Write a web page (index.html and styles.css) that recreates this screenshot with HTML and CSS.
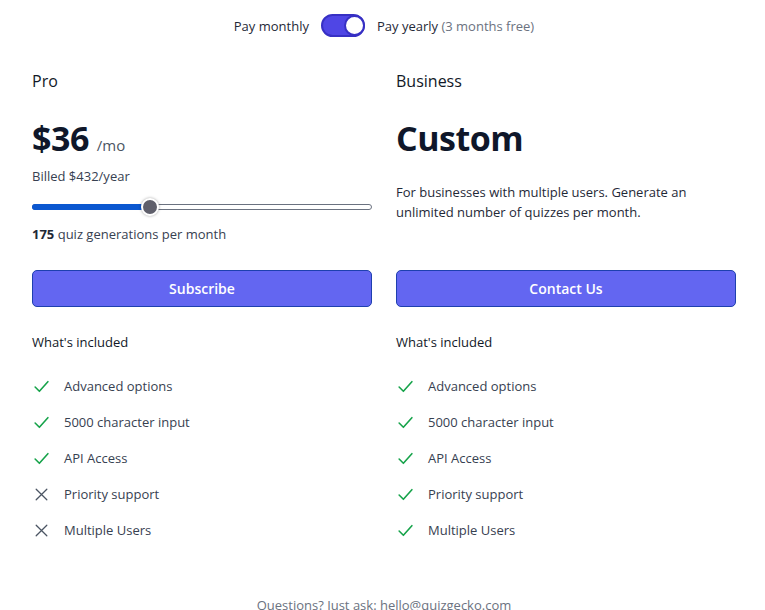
FILE: index.html
```html
<!DOCTYPE html>
<html>
<head>
<meta charset="utf-8">
<link rel="stylesheet" href="styles.css">
</head>
<body>
<div class="page">
  <div class="billing">
    <span class="label">Pay monthly</span>
    <span class="switch"><span class="knob"></span></span>
    <span class="label">Pay yearly <span class="muted">(3 months free)</span></span>
  </div>

  <div class="plans">
    <section class="plan">
      <div class="plan-top">
        <h2 class="plan-name">Pro</h2>
        <div class="price-row">
          <span class="price">$36</span>
          <span class="per">/mo</span>
        </div>
        <p class="billed">Billed $432/year</p>
        <div class="slider">
          <div class="fill" style="width: 34.5%"></div>
          <div class="thumb" style="left: 34.5%"></div>
        </div>
        <p class="usage"><b>175</b> quiz generations per month</p>
      </div>
      <button class="cta">Subscribe</button>
      <h3 class="included">What's included</h3>
      <ul class="features">
        <li><svg class="ic yes" viewBox="0 0 16 16"><path d="M2 8.5 L6 12.5 L14 3.5"/></svg>Advanced options</li>
        <li><svg class="ic yes" viewBox="0 0 16 16"><path d="M2 8.5 L6 12.5 L14 3.5"/></svg>5000 character input</li>
        <li><svg class="ic yes" viewBox="0 0 16 16"><path d="M2 8.5 L6 12.5 L14 3.5"/></svg>API Access</li>
        <li><svg class="ic no" viewBox="0 0 16 16"><path d="M3 3 L13 13 M13 3 L3 13"/></svg>Priority support</li>
        <li><svg class="ic no" viewBox="0 0 16 16"><path d="M3 3 L13 13 M13 3 L3 13"/></svg>Multiple Users</li>
      </ul>
    </section>

    <section class="plan">
      <div class="plan-top">
        <h2 class="plan-name">Business</h2>
        <div class="price-row">
          <span class="price">Custom</span>
        </div>
        <p class="desc">For businesses with multiple users. Generate an unlimited number of quizzes per month.</p>
      </div>
      <button class="cta">Contact Us</button>
      <h3 class="included">What's included</h3>
      <ul class="features">
        <li><svg class="ic yes" viewBox="0 0 16 16"><path d="M2 8.5 L6 12.5 L14 3.5"/></svg>Advanced options</li>
        <li><svg class="ic yes" viewBox="0 0 16 16"><path d="M2 8.5 L6 12.5 L14 3.5"/></svg>5000 character input</li>
        <li><svg class="ic yes" viewBox="0 0 16 16"><path d="M2 8.5 L6 12.5 L14 3.5"/></svg>API Access</li>
        <li><svg class="ic yes" viewBox="0 0 16 16"><path d="M2 8.5 L6 12.5 L14 3.5"/></svg>Priority support</li>
        <li><svg class="ic yes" viewBox="0 0 16 16"><path d="M2 8.5 L6 12.5 L14 3.5"/></svg>Multiple Users</li>
      </ul>
    </section>
  </div>

  <p class="footer">Questions? Just ask: hello@quizgecko.com</p>
</div>
</body>
</html>
```

FILE: styles.css
```css
* { box-sizing: border-box; }
html, body { margin: 0; padding: 0; background: #fff; }
body {
  font-family: "Open Sans", "Noto Sans", Arial, sans-serif;
  color: #1f2937;
  overflow: hidden;
}
.page {
  width: 704px;
  margin-left: 32px;
  padding-top: 14px;
}
.billing {
  display: flex;
  align-items: center;
  justify-content: center;
  gap: 12px;
  height: 23px;
  font-size: 13px;
  color: #1f2937;
}
.muted { color: #6b7280; }
.switch {
  width: 44px;
  height: 23px;
  border-radius: 12px;
  background: #4f46e5;
  border: 2px solid #3730c4;
  display: flex;
  justify-content: flex-end;
  align-items: center;
}
.knob {
  width: 21px;
  height: 21px;
  border-radius: 50%;
  background: #fff;
  border: 2px solid #3730c4;
  margin-right: -2px;
}
.plans {
  display: grid;
  grid-template-columns: 340px 340px;
  column-gap: 24px;
  margin-top: 32px;
}
.plan { display: flex; flex-direction: column; }
.plan-top {
  height: 201px;
  display: flex;
  flex-direction: column;
}
.plan-name {
  margin: 0;
  font-size: 16px;
  font-weight: 400;
  line-height: 24px;
  color: #111827;
}
.price-row {
  display: flex;
  align-items: baseline;
  gap: 8px;
  margin-top: 25px;
  height: 40px;
}
.price {
  font-size: 34px;
  font-weight: 700;
  line-height: 40px;
  color: #0f172a;
  letter-spacing: -0.5px;
}
.per {
  font-size: 15px;
  color: #4b5563;
}
.billed {
  margin: 9px 0 0;
  font-size: 13px;
  line-height: 18px;
  color: #374151;
}
.slider {
  position: relative;
  height: 6px;
  margin-top: 19px;
  border: 1px solid #6b7280;
  border-radius: 3px;
  background: #fff;
}
.fill {
  position: absolute;
  left: -1px; top: -1px; bottom: -1px;
  background: #0b57d0;
  border-radius: 3px 0 0 3px;
}
.thumb {
  position: absolute;
  top: 50%;
  width: 18px; height: 18px;
  margin: -9px 0 0 -9px;
  border-radius: 50%;
  background: #5f5f6b;
  border: 2px solid #fff;
  box-shadow: 0 0 3px rgba(0,0,0,0.35);
}
.usage {
  margin: 15px 0 0;
  font-size: 13px;
  line-height: 18px;
  color: #374151;
}
.usage b { color: #1f2937; }
.desc {
  margin: 24px 0 0;
  font-size: 13px;
  line-height: 20px;
  color: #1f2937;
}
.cta {
  height: 37px;
  width: 100%;
  background: #6366f1;
  border: 1px solid #1e40af;
  border-radius: 5px;
  color: #fff;
  font-family: inherit;
  font-size: 14px;
  font-weight: 600;
}
.included {
  margin: 26px 0 0;
  font-size: 13px;
  font-weight: 400;
  line-height: 18px;
  color: #111827;
}
.features {
  list-style: none;
  margin: 25px 0 0;
  padding: 0;
  display: flex;
  flex-direction: column;
  gap: 16px;
}
.features li {
  display: flex;
  align-items: center;
  gap: 14px;
  height: 20px;
  font-size: 13px;
  color: #374151;
}
.ic {
  width: 17px; height: 17px;
  margin-left: 1px;
  fill: none;
  stroke-width: 1.5;
  stroke-linecap: round;
  stroke-linejoin: round;
}
.ic.yes { stroke: #16a34a; }
.ic.no { stroke: #4b5563; stroke-width: 1.2; }
.footer {
  margin: 56px 0 0;
  text-align: center;
  font-size: 13px;
  color: #6b7280;
  width: 704px;
}
```
